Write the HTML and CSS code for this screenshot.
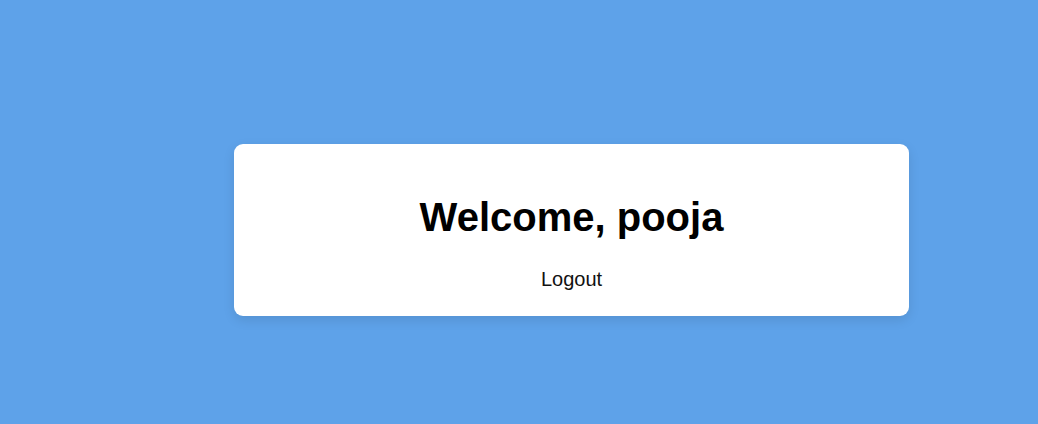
FILE: index.html
```html
<!DOCTYPE html>
<html>
<head>
<meta charset="utf-8">
<link rel="stylesheet" href="styles.css">
</head>
<body>
<main class="page">
  <section class="card">
    <h1 class="title">Welcome, pooja</h1>
    <button class="logout">Logout</button>
  </section>
</main>
</body>
</html>
```
FILE: styles.css
```css
html, body {
  margin: 0;
  padding: 0;
  height: 100%;
}
body {
  background: #5ea2e9;
  font-family: "Liberation Sans", Arial, sans-serif;
}
.page {
  display: flex;
  justify-content: center;
  padding: 144px 0 0 105px;
}
.card {
  width: 675px;
  box-sizing: border-box;
  background: #fff;
  border-radius: 9px;
  padding: 20px 20px 22px;
  display: flex;
  flex-direction: column;
  align-items: center;
  box-shadow: 0 4px 12px rgba(0, 0, 0, 0.1);
}
.title {
  font-size: 40px;
  font-weight: bold;
  margin: 30px 0 25px;
  line-height: 46px;
  color: #000;
}
.logout {
  font-family: "Liberation Sans", Arial, sans-serif;
  font-size: 20px;
  line-height: 23px;
  padding: 3px 6px;
  border: none;
  background: none;
  color: #111;
  cursor: pointer;
}
```
